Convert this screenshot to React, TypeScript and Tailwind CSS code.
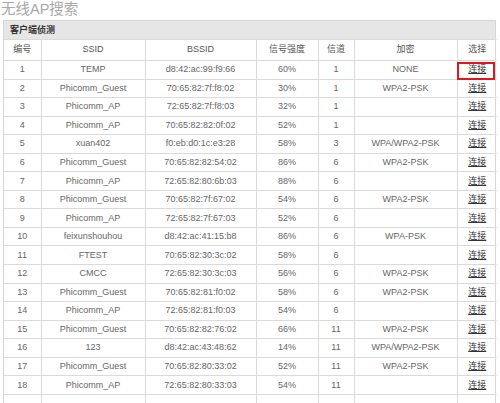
import React from "react";

const rows: [string, string, string, string, string, string][] = [
  ["1", "TEMP", "d8:42:ac:99:f9:66", "60%", "1", "NONE"],
  ["2", "Phicomm_Guest", "70:65:82:7f:f8:02", "30%", "1", "WPA2-PSK"],
  ["3", "Phicomm_AP", "72:65:82:7f:f8:03", "32%", "1", ""],
  ["4", "Phicomm_AP", "70:65:82:82:0f:02", "52%", "1", ""],
  ["5", "xuan402", "f0:eb:d0:1c:e3:28", "58%", "3", "WPA/WPA2-PSK"],
  ["6", "Phicomm_Guest", "70:65:82:82:54:02", "86%", "6", "WPA2-PSK"],
  ["7", "Phicomm_AP", "72:65:82:80:6b:03", "88%", "6", ""],
  ["8", "Phicomm_Guest", "70:65:82:7f:67:02", "54%", "6", "WPA2-PSK"],
  ["9", "Phicomm_AP", "72:65:82:7f:67:03", "52%", "6", ""],
  ["10", "feixunshouhou", "d8:42:ac:41:15:b8", "86%", "6", "WPA-PSK"],
  ["11", "FTEST", "70:65:82:30:3c:02", "58%", "6", ""],
  ["12", "CMCC", "72:65:82:30:3c:03", "56%", "6", "WPA2-PSK"],
  ["13", "Phicomm_Guest", "70:65:82:81:f0:02", "58%", "6", "WPA2-PSK"],
  ["14", "Phicomm_AP", "72:65:82:81:f0:03", "54%", "6", ""],
  ["15", "Phicomm_Guest", "70:65:82:82:76:02", "66%", "11", "WPA2-PSK"],
  ["16", "123", "d8:42:ac:43:48:62", "14%", "11", "WPA/WPA2-PSK"],
  ["17", "Phicomm_Guest", "70:65:82:80:33:02", "52%", "11", "WPA2-PSK"],
  ["18", "Phicomm_AP", "72:65:82:80:33:03", "54%", "11", ""],
  ["", "", "", "", "", ""],
];

const headers = ["编号", "SSID", "BSSID", "信号强度", "信道", "加密", "选择"];

export default function App() {
  return (
    <div
      className="w-[500px] h-[403px] overflow-hidden bg-white"
      style={{ fontFamily: '"Liberation Sans", Arial, "Noto Sans CJK SC", sans-serif' }}
    >
      <div className="h-[20px] pl-[1px] pt-[1px] text-[14.5px] leading-[17px] text-[#a8a8a8]">无线AP搜索</div>
      <div className="ml-[3px] w-[493px] border border-[#d6d6d6]">
        <div className="h-[18px] bg-[#e6e6e6] pl-[6px] text-[9px] font-bold leading-[18px] text-[#333]">
          客户端侦测
        </div>
        <table className="w-full table-fixed border-collapse text-[9px] text-[#666]">
          <colgroup>
            <col className="w-[37px]" />
            <col className="w-[104px]" />
            <col className="w-[111px]" />
            <col className="w-[62px]" />
            <col className="w-[36px]" />
            <col className="w-[103px]" />
            <col className="w-[40px]" />
          </colgroup>
          <thead>
            <tr className="h-[21px]">
              {headers.map((h, i) => (
                <th
                  key={i}
                  className="border border-[#dadada] p-0 text-center font-normal text-[#555] first:border-l-0 last:border-r-0"
                >
                  {h}
                </th>
              ))}
            </tr>
          </thead>
          <tbody>
            {rows.map((r, ri) => (
              <tr key={ri} className="h-[18.55px]">
                {r.map((c, ci) => (
                  <td
                    key={ci}
                    className="border border-[#dadada] p-0 text-center leading-[17px] first:border-l-0"
                  >
                    {c}
                  </td>
                ))}
                <td className="relative border border-[#dadada] border-r-0 p-0 text-center leading-[17px]">
                  {r[0] !== "" && (
                    <a className="text-[#333] underline underline-offset-[1px]">连接</a>
                  )}
                  {ri === 0 && (
                    <div className="pointer-events-none absolute left-[-1px] right-[2px] top-[1px] bottom-[-1px] border-2 border-[#e8141b]" />
                  )}
                </td>
              </tr>
            ))}
          </tbody>
        </table>
      </div>
    </div>
  );
}
